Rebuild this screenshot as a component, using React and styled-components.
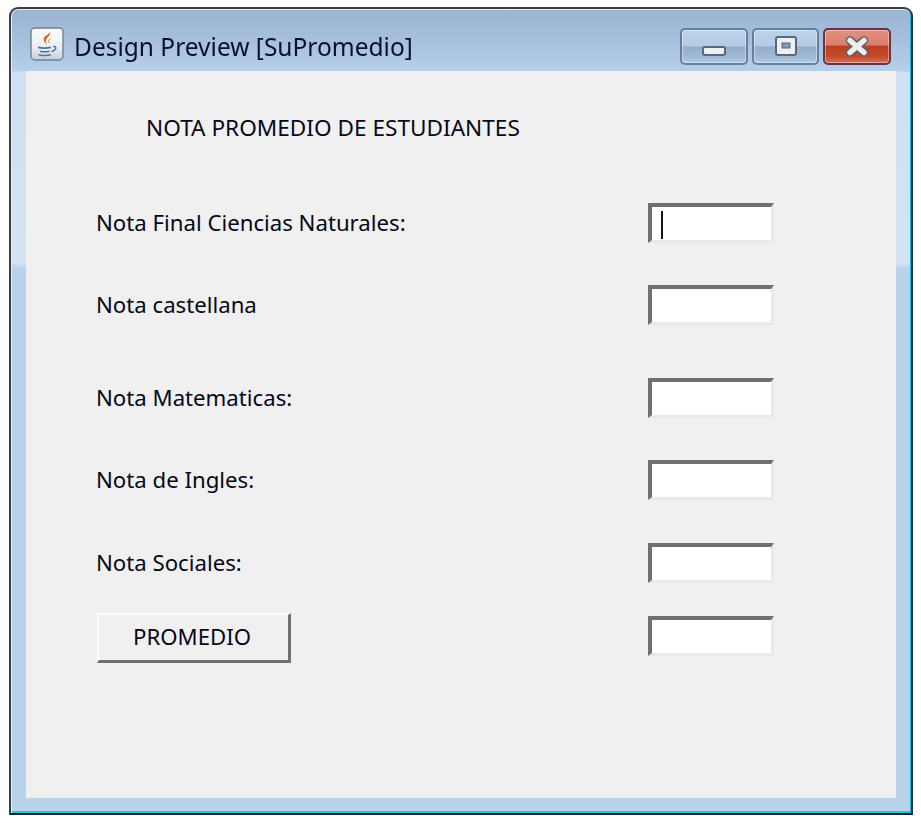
import React from "react";
import styled, { createGlobalStyle } from "styled-components";

const Global = createGlobalStyle`
  html, body { margin: 0; padding: 0; background: #ffffff; }
  body { width: 921px; height: 823px; overflow: hidden; }
`;

const Page = styled.div`
  box-sizing: border-box;
  width: 921px;
  height: 823px;
  padding: 7px 8px 8px 9px;
  filter: blur(0.55px);
`;

const Window = styled.div`
  box-sizing: border-box;
  width: 904px;
  height: 808px;
  display: flex;
  flex-direction: column;
  border: 2px solid #3a3f44;
  border-bottom-color: #10262e;
  border-right-color: #20383f;
  border-radius: 9px 9px 0 0;
  box-shadow: inset 0 1px 0 #e3eef8, inset 1px 0 0 #e8f1f9, inset -1px 0 0 #27b4dc, inset 0 -2px 0 #26c4e8;
  background: linear-gradient(
    180deg,
    #9ab4d2 0,
    #a5bfdc 30px,
    #b6d0eb 62px,
    #cfe0f2 63px,
    #d3e3f3 254px,
    #b9d2ec 260px,
    #b9d2ec 100%
  );
  padding: 0 15px 15px 15px;
`;

const TitleBar = styled.div`
  box-sizing: border-box;
  height: 62px;
  flex: none;
  display: flex;
  align-items: flex-start;
  padding: 18px 5px 0 4px;
`;

const TitleIcon = styled.svg`
  width: 34px;
  height: 34px;
  flex: none;
`;

const TitleText = styled.span`
  margin: 2px 0 0 10px;
  font: 400 24.5px/36px "Noto Sans", Tahoma, sans-serif;
  color: #0c1030;
  white-space: nowrap;
`;

const WindowControls = styled.div`
  margin-left: auto;
  display: flex;
  gap: 4px;
  padding-top: 1px;
`;

const ControlButton = styled.div`
  box-sizing: border-box;
  width: ${(p) => p.$width}px;
  height: 37px;
  display: flex;
  align-items: center;
  justify-content: center;
  border: 2px solid ${(p) => (p.$close ? "#6a3540" : "#65809e")};
  border-radius: 5px;
  background: ${(p) =>
    p.$close
      ? "linear-gradient(180deg,#e0907f 0,#d97f6d 45%,#bd3f1f 50%,#c44b2b 80%,#d5705a 100%)"
      : "linear-gradient(180deg,#bdd2ea 0,#b4cbe6 48%,#92aecb 52%,#a3bcd8 85%,#b7cee8 100%)"};
  box-shadow: inset 0 0 0 1px rgba(255, 255, 255, 0.4);
`;

const Panel = styled.main`
  flex: 1;
  min-height: 0;
  background: #f0f0f0;
  padding: 0 122px 0 70px;
  display: flex;
  flex-direction: column;
`;

const Heading = styled.h1`
  margin: 42px 0 0 50px;
  height: 30px;
  font: 400 22.6px/30px "Noto Sans", Tahoma, sans-serif;
  color: #060818;
  white-space: nowrap;
`;

const Row = styled.div`
  display: flex;
  align-items: center;
  justify-content: space-between;
  height: 40px;
  margin-top: ${(p) => p.$top}px;
`;

const Label = styled.label`
  font: 400 22.2px/30px "Noto Sans", Tahoma, sans-serif;
  color: #060818;
  white-space: nowrap;
`;

const Field = styled.div`
  box-sizing: border-box;
  width: 126px;
  height: 40px;
  background: #ffffff;
  border-style: solid;
  border-width: 4px 3px 3px 4px;
  border-color: #707070 #e9e9e9 #e9e9e9 #707070;
  padding: 4px 0 0 9px;
`;

const Caret = styled.div`
  width: 2px;
  height: 28px;
  background: #141414;
`;

const PushButton = styled.button`
  box-sizing: border-box;
  width: 194px;
  height: 50px;
  margin-left: 1px;
  padding: 0 3px 2px 0;
  background: #f0f0f0;
  border-style: solid;
  border-width: 2px 3px 3px 2px;
  border-color: #fbfbfb #707070 #707070 #fbfbfb;
  font: 400 22.2px/30px "Noto Sans", Tahoma, sans-serif;
  color: #060818;
`;

const ButtonRow = styled(Row)`
  height: 50px;
  align-items: flex-start;
`;

const ResultField = styled(Field)`
  margin-top: 3px;
`;

const rows = [
  { label: "Nota Final Ciencias Naturales:", top: 60, caret: true },
  { label: "Nota castellana", top: 42 },
  { label: "Nota Matematicas:", top: 53 },
  { label: "Nota de Ingles:", top: 42 },
  { label: "Nota Sociales:", top: 43 },
];

function JavaIcon() {
  return (
    <TitleIcon viewBox="0 0 34 34">
      <defs>
        <linearGradient id="tile" x1="0" y1="0" x2="0" y2="1">
          <stop offset="0" stopColor="#fbfbfb" />
          <stop offset="0.6" stopColor="#eceff2" />
          <stop offset="1" stopColor="#c5ced8" />
        </linearGradient>
      </defs>
      <rect x="1" y="1" width="32" height="32" rx="4" fill="url(#tile)" stroke="#6f8196" strokeWidth="1.4" />
      <path d="M20 5c1.500 3.500-5 5.500-4 10 .3 1 1 2 1.500 2.500-3-2-5-4.500-3-7.500C16 8 19 7.500 20 5z" fill="#dd6418" />
      <path d="M23 10.500c-3.500 1.500-4.500 3.500-3.300 6.500-2.500-2-2-5 3.300-6.500z" fill="#e8852c" />
      <path d="M8 19.500c4 1 9 1 13 0v1.800c-4 1-9 1-13 0z" fill="#4f7398" />
      <path d="M10 23.500c3 .8 7 .8 9.500 0v1.500c-3 .8-6.500 .8-9.500 0z" fill="#4f7398" />
      <path d="M8.500 27c3.500 1 9 1 12.500 0v1.500c-3.500 1-9 1-12.500 0z" fill="#4f7398" />
      <path d="M23 19.500c4-.5 4 3.500 -1.500 5" fill="none" stroke="#4f7398" strokeWidth="1.500" />
    </TitleIcon>
  );
}

function MinimizeGlyph() {
  return (
    <svg width="26" height="26" viewBox="0 0 26 26">
      <rect x="2" y="13" width="22" height="8" rx="2" fill="#eef0f2" stroke="#5b6678" strokeWidth="2" />
    </svg>
  );
}

function MaximizeGlyph() {
  return (
    <svg width="26" height="26" viewBox="0 0 26 26">
      <rect x="3" y="3" width="20" height="18" rx="2" fill="#eef0f2" stroke="#5b6678" strokeWidth="2" />
      <rect x="9" y="9" width="8" height="5" fill="#7f9ac0" stroke="#5b6678" strokeWidth="1" />
    </svg>
  );
}

function CloseGlyph() {
  return (
    <svg width="28" height="24" viewBox="0 0 28 24">
      <path d="M7 5.500l14 12M21 5.500L7 17.500" stroke="#59606e" strokeWidth="8.500" strokeLinecap="round" fill="none" />
      <path d="M7 5.500l14 12M21 5.500L7 17.500" stroke="#eeeeee" strokeWidth="5.500" strokeLinecap="round" fill="none" />
    </svg>
  );
}

export default function App() {
  return (
    <Page>
      <Global />
      <Window>
        <TitleBar>
          <JavaIcon />
          <TitleText>Design Preview [SuPromedio]</TitleText>
          <WindowControls>
            <ControlButton $width={68}>
              <MinimizeGlyph />
            </ControlButton>
            <ControlButton $width={67}>
              <MaximizeGlyph />
            </ControlButton>
            <ControlButton $width={68} $close>
              <CloseGlyph />
            </ControlButton>
          </WindowControls>
        </TitleBar>
        <Panel>
          <Heading>NOTA PROMEDIO DE ESTUDIANTES</Heading>
          {rows.map((r) => (
            <Row key={r.label} $top={r.top}>
              <Label>{r.label}</Label>
              <Field>{r.caret && <Caret />}</Field>
            </Row>
          ))}
          <ButtonRow $top={30}>
            <PushButton>PROMEDIO</PushButton>
            <ResultField />
          </ButtonRow>
        </Panel>
      </Window>
    </Page>
  );
}
